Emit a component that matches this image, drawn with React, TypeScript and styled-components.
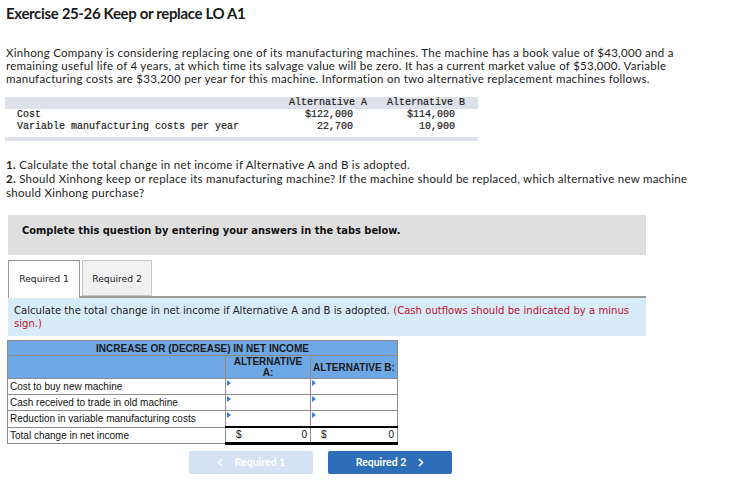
import React from "react"
import styled, { createGlobalStyle } from "styled-components"

const GlobalStyle = createGlobalStyle`
  body {
    margin: 0;
    background: #fff;
    font-family: Lato, "Open Sans", sans-serif;
    color: #222;
  }
`

const Page = styled.div`
  width: 733px;
  height: 491px;
  padding: 4px 0 0 6px;
  box-sizing: border-box;
  overflow: hidden;
`

const Title = styled.h1`
  margin: 0;
  font-family: Lato, sans-serif;
  font-weight: 700;
  font-size: 15px;
  letter-spacing: -0.35px;
  line-height: 18px;
  color: #1a1a1a;
`

const Para = styled.p`
  margin: 24px 0 0 0;
  width: 690px;
  font-size: 11.5px;
  letter-spacing: 0.28px;
  line-height: 13px;
  color: #222;
`

const DataTable = styled.div`
  margin: 12px 0 0 -1px;
  width: 473px;
  font-family: "Liberation Mono", monospace;
  font-size: 10px;
  -webkit-text-stroke: 0.2px #222;
  color: #222;
`

const DataRow = styled.div<{ $head?: boolean }>`
  display: grid;
  grid-template-columns: 272px 100px 101px;
  height: 12px;
  line-height: 12px;
  background: ${p => (p.$head ? "#dfe1ea" : "#fff")};
`

const DataLabel = styled.div`
  padding-left: 12px;
  white-space: pre;
`

const DataCell = styled.div<{ $pr: number }>`
  text-align: right;
  padding-right: ${p => p.$pr}px;
  white-space: pre;
`

const DataFoot = styled.div`
  margin-top: 4px;
  height: 4px;
  background: #dfe1ea;
`

const Questions = styled.div`
  margin-top: 17px;
  width: 690px;
  font-size: 11.5px;
  letter-spacing: 0.28px;
  line-height: 14px;
  color: #222;
  b {
    font-weight: 700;
  }
`

const Instruction = styled.div`
  margin: 15px 0 0 2px;
  width: 638px;
  height: 40px;
  background: #dfdfdf;
  box-sizing: border-box;
  padding: 10px 0 0 14px;
  font-family: "DejaVu Sans", Verdana, sans-serif;
  font-weight: 700;
  font-size: 9.9px;
  color: #111;
`

const Tabs = styled.div`
  margin: 5px 0 0 2px;
  display: flex;
  gap: 2px;
  width: 638px;
  height: 36px;
  border-bottom: 2px solid #9a9a9a;
`

const Tab = styled.div<{ $active?: boolean }>`
  flex: none;
  width: ${p => (p.$active ? "72px" : "70px")};
  height: ${p => (p.$active ? "38px" : "36px")};
  box-sizing: border-box;
  border: 1px solid ${p => (p.$active ? "#9a9a9a" : "#c8c8c8")};
  border-bottom: ${p => (p.$active ? "none" : "1px solid #c8c8c8")};
  background: ${p => (p.$active ? "#fff" : "#f1f1f1")};
  font-family: "DejaVu Sans", Verdana, sans-serif;
  font-size: 9.2px;
  white-space: nowrap;
  color: #222;
  display: flex;
  align-items: center;
  justify-content: center;
  padding-bottom: ${p => (p.$active ? "2px" : "0")};
`

const Info = styled.div`
  margin-left: 2px;
  width: 638px;
  height: 38px;
  box-sizing: border-box;
  background: #d7ebf9;
  padding: 6px 10px 0 6px;
  font-family: "DejaVu Sans", Verdana, sans-serif;
  font-size: 10.1px;
  line-height: 13px;
  color: #222;
`

const Red = styled.span`
  color: #c4102b;
`

const ResultTable = styled.table`
  margin: 4px 0 0 1px;
  border-collapse: collapse;
  font-family: "Liberation Sans", Arial, sans-serif;
  font-size: 10px;
  color: #111;
  table-layout: fixed;
  width: 390px;
`

const HeadCell = styled.th<{ $h: number }>`
  background: #6ea8e4;
  border: 1px solid #8c8c8c;
  height: ${p => p.$h}px;
  padding: 0;
  font-weight: 700;
  text-align: center;
  line-height: 11px;
  color: #1a1a1a;
`

const LabelCell = styled.td`
  border: 1px solid #8c8c8c;
  height: 15px;
  padding: 0 0 0 2px;
  white-space: nowrap;
  line-height: 15px;
`

const InputCell = styled.td`
  border: 1px solid #8c8c8c;
  height: 15px;
  padding: 0;
  position: relative;
  background: #fff;
`

const Marker = styled.span`
  position: absolute;
  left: 1px;
  top: 1px;
  width: 0;
  height: 0;
  border-top: 3px solid transparent;
  border-bottom: 3px solid transparent;
  border-left: 4px solid #3c7fd6;
`

const TotalCell = styled.td`
  border: 1px solid #8c8c8c;
  border-top: 2px solid #000;
  border-bottom: 3px solid #000;
  height: 13px;
  padding: 0 3px 0 10px;
  line-height: 13px;
`

const TotalInner = styled.div`
  display: flex;
  justify-content: space-between;
`

const Nav = styled.div`
  margin: 6px 0 0 183px;
  display: flex;
  gap: 15px;
`

const NavButton = styled.div<{ $disabled?: boolean }>`
  width: 124px;
  height: 23px;
  border-radius: 2px;
  background: ${p => (p.$disabled ? "#d5e2f3" : "#2e6db7")};
  color: #fff;
  font-family: Lato, "Open Sans", sans-serif;
  font-weight: 700;
  font-size: 10.5px;
  display: flex;
  align-items: center;
  justify-content: center;
  gap: 12px;
`

const Chevron = ({ dir }: { dir: "left" | "right" }) => (
  <svg width="6" height="9" viewBox="0 0 6 9">
    <path
      d={dir === "left" ? "M5 1 L1.5 4.5 L5 8" : "M1 1 L4.5 4.5 L1 8"}
      fill="none"
      stroke="#fff"
      strokeWidth="1.6"
    />
  </svg>
)

const rows = [
  "Cost to buy new machine",
  "Cash received to trade in old machine",
  "Reduction in variable manufacturing costs",
]

export default function App() {
  return (
    <>
      <GlobalStyle />
      <Page>
        <Title>Exercise 25-26 Keep or replace LO A1</Title>
        <Para>
          Xinhong Company is considering replacing one of its manufacturing machines. The machine has a book value of
          $43,000 and a remaining useful life of 4 years, at which time its salvage value will be zero. It has a current
          market value of $53,000. Variable manufacturing costs are $33,200 per year for this machine. Information on two
          alternative replacement machines follows.
        </Para>

        <DataTable>
          <DataRow $head>
            <DataLabel />
            <DataCell $pr={10}>Alternative A</DataCell>
            <DataCell $pr={13}>Alternative B</DataCell>
          </DataRow>
          <DataRow>
            <DataLabel>Cost</DataLabel>
            <DataCell $pr={24}>$122,000</DataCell>
            <DataCell $pr={23}>$114,000</DataCell>
          </DataRow>
          <DataRow>
            <DataLabel>Variable manufacturing costs per year</DataLabel>
            <DataCell $pr={24}>22,700</DataCell>
            <DataCell $pr={23}>10,900</DataCell>
          </DataRow>
          <DataFoot />
        </DataTable>

        <Questions>
          <b>1.</b> Calculate the total change in net income if Alternative A and B is adopted.
          <br />
          <b>2.</b> Should Xinhong keep or replace its manufacturing machine? If the machine should be replaced, which
          alternative new machine should Xinhong purchase?
        </Questions>

        <Instruction>Complete this question by entering your answers in the tabs below.</Instruction>

        <Tabs>
          <Tab $active>Required 1</Tab>
          <Tab>Required 2</Tab>
        </Tabs>
        <Info>
          Calculate the total change in net income if Alternative A and B is adopted.{" "}
          <Red>(Cash outflows should be indicated by a minus sign.)</Red>
        </Info>

        <ResultTable>
          <colgroup>
            <col style={{ width: 218 }} />
            <col style={{ width: 85 }} />
            <col style={{ width: 87 }} />
          </colgroup>
          <thead>
            <tr>
              <HeadCell $h={14} colSpan={3}>
                INCREASE OR (DECREASE) IN NET INCOME
              </HeadCell>
            </tr>
            <tr>
              <HeadCell $h={22} />
              <HeadCell $h={22}>
                ALTERNATIVE
                <br />
                A:
              </HeadCell>
              <HeadCell $h={22}>ALTERNATIVE B:</HeadCell>
            </tr>
          </thead>
          <tbody>
            {rows.map(r => (
              <tr key={r}>
                <LabelCell>{r}</LabelCell>
                <InputCell>
                  <Marker />
                </InputCell>
                <InputCell>
                  <Marker />
                </InputCell>
              </tr>
            ))}
            <tr>
              <LabelCell>Total change in net income</LabelCell>
              <TotalCell>
                <TotalInner>
                  <span>$</span>
                  <span>0</span>
                </TotalInner>
              </TotalCell>
              <TotalCell>
                <TotalInner>
                  <span>$</span>
                  <span>0</span>
                </TotalInner>
              </TotalCell>
            </tr>
          </tbody>
        </ResultTable>

        <Nav>
          <NavButton $disabled>
            <Chevron dir="left" />
            <span>Required 1</span>
          </NavButton>
          <NavButton>
            <span>Required 2</span>
            <Chevron dir="right" />
          </NavButton>
        </Nav>
      </Page>
    </>
  )
}
